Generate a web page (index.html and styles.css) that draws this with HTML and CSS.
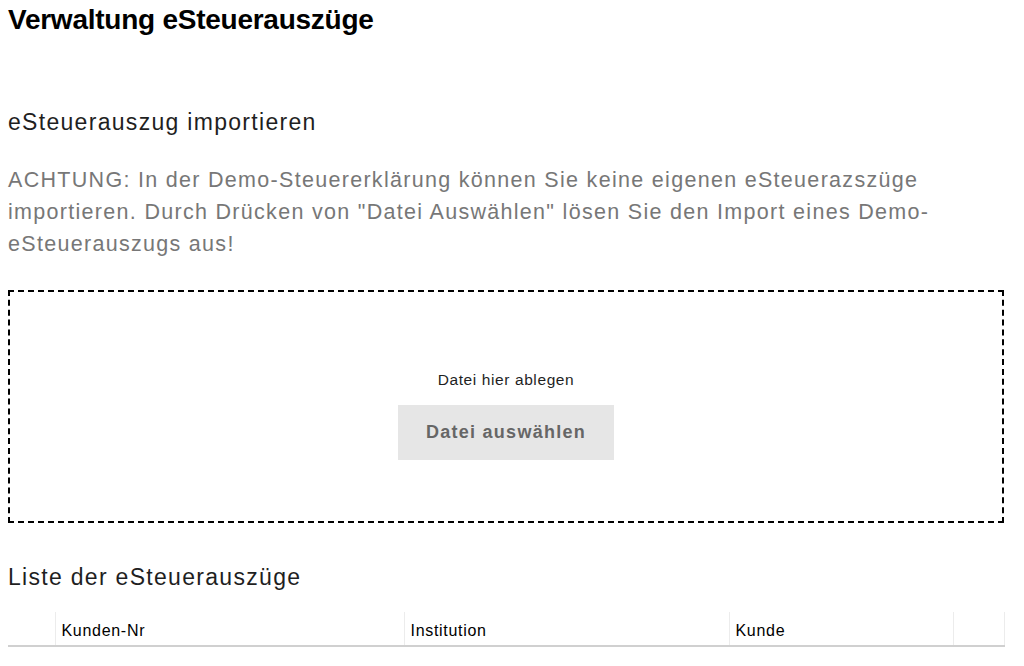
FILE: index.html
```html
<!DOCTYPE html>
<html lang="de">
<head>
<meta charset="UTF-8">
<meta name="viewport" content="width=device-width, initial-scale=1">
<title>Verwaltung eSteuerauszüge</title>
<link rel="stylesheet" href="styles.css">
</head>
<body>
<h1>Verwaltung eSteuerauszüge</h1>

<section class="import">
  <h2>eSteuerauszug importieren</h2>
  <p class="hint">ACHTUNG: In der Demo-Steuererklärung können Sie keine eigenen eSteuerazszüge importieren. Durch Drücken von "Datei Auswählen" lösen Sie den Import eines Demo-eSteuerauszugs aus!</p>
  <div class="dropzone">
    <span class="drop-label">Datei hier ablegen</span>
    <button class="pick-btn">Datei auswählen</button>
  </div>
</section>

<section class="list">
  <h2>Liste der eSteuerauszüge</h2>
  <table>
    <thead>
      <tr><th class="c-sel"></th><th class="c-nr">Kunden-Nr</th><th class="c-inst">Institution</th><th class="c-kunde">Kunde</th><th class="c-act"></th></tr>
    </thead>
    <tbody></tbody>
  </table>
</section>
</body>
</html>
```

FILE: styles.css
```css
:root{
  --text:#1f1f1f;--sub:#777;--line:#ececec;--line-strong:#d0d0d0;--btn:#e6e6e6;--btn-text:#666
}
*{box-sizing:border-box;margin:0;padding:0}
body{font-family:"Liberation Sans",Arial,Helvetica,sans-serif;color:var(--text);padding:4px 20px 0 8px;background:#fff}
h1{font-size:28px;font-weight:700;line-height:32px;letter-spacing:-.25px;color:#000}
h2{font-size:23px;font-weight:400;line-height:28px;letter-spacing:1.3px}
.import{margin-top:72px}
.hint{margin-top:28px;font-size:21.5px;line-height:32px;color:var(--sub);letter-spacing:1.3px}
.dropzone{margin-top:30px;height:233px;border:2px dashed #000;display:flex;flex-direction:column;align-items:center;justify-content:center;gap:16px;padding-top:18px}
.drop-label{font-size:15.5px;line-height:18px;letter-spacing:.6px}
.pick-btn{width:216px;height:55px;border:none;background:var(--btn);color:var(--btn-text);font-family:inherit;font-size:18px;font-weight:700;letter-spacing:1.25px;cursor:pointer}
.list{margin-top:40px}
table{width:996px;border-collapse:collapse;margin-top:21px;font-size:16px;letter-spacing:.7px;table-layout:fixed}
th{height:34px;text-align:left;font-weight:400;padding:4px 6px 0;border-left:1px solid var(--line);border-bottom:2px solid var(--line-strong);color:#000}
th:first-child{border-left:none}
th:last-child{border-right:1px solid var(--line)}
.c-sel{width:47px}
.c-nr{width:349px}
.c-inst{width:325px}
.c-kunde{width:224px}
.c-act{width:51px}
```
